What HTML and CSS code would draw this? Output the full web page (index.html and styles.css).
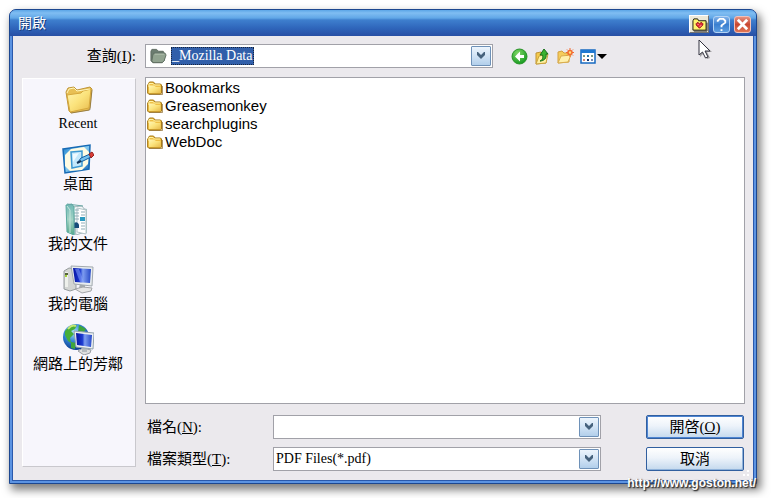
FILE: index.html
```html
<!DOCTYPE html>
<html lang="zh-Hant">
<head>
<meta charset="utf-8">
<meta name="viewport" content="width=device-width, initial-scale=1">
<title>開啟</title>
<link rel="stylesheet" href="styles.css">
</head>
<body>
<svg class="defs" aria-hidden="true">
  <defs>
    <linearGradient id="gold" x1="0" y1="0" x2="1" y2="1"><stop offset="0" stop-color="#fff6b5"/><stop offset=".5" stop-color="#fbe37c"/><stop offset="1" stop-color="#e8bb4c"/></linearGradient>
    <linearGradient id="blue" x1="0" y1="0" x2="1" y2="1"><stop offset="0" stop-color="#1c7ecb"/><stop offset=".45" stop-color="#8bd0f4"/><stop offset="1" stop-color="#1463b4"/></linearGradient>
    <linearGradient id="screen" x1="0" y1="0" x2="1" y2="0"><stop offset="0" stop-color="#0714a4"/><stop offset=".4" stop-color="#1c3bd0"/><stop offset=".55" stop-color="#7e9df0"/><stop offset="1" stop-color="#2648c8"/></linearGradient>
    <linearGradient id="teal" x1="0" y1="0" x2="0" y2="1"><stop offset="0" stop-color="#6fb7b5"/><stop offset=".5" stop-color="#a4d3c5"/><stop offset="1" stop-color="#55a889"/></linearGradient>
    <radialGradient id="globe" cx=".4" cy=".3" r=".7"><stop offset="0" stop-color="#a9e3fb"/><stop offset=".5" stop-color="#3487d5"/><stop offset="1" stop-color="#0c3c93"/></radialGradient>
    <radialGradient id="green" cx=".4" cy=".3" r=".7"><stop offset="0" stop-color="#82d867"/><stop offset="1" stop-color="#179b22"/></radialGradient>
    <symbol id="folder" viewBox="0 0 16 14"><path d="M1 3.5 2.5 1h4L8 3h5.5l1 1v8l-1 1h-12L.6 12V4z" fill="#efbf45" stroke="#a77a18"/><path d="M2 4.5h5L9 6h4.5v6H2z" fill="url(#gold)"/><path d="M2 6V2.5h4L7.5 4H13" fill="none" stroke="#fff3a7"/><path d="M15.5 5v8.5H2" fill="none" stroke="#85601c" opacity=".65"/></symbol>
    <symbol id="chevron" viewBox="0 0 10 8"><path d="M1 0v3l4 4 4-4V0H8L5 3 2 0z" fill="#46627d"/></symbol>
  </defs>
</svg>

<main class="dialog">
  <header class="titlebar">
    <h1>開啟</h1>
    <button class="cap cap-fav" aria-label="我的最愛"><svg viewBox="0 0 18 16"><path d="M2 14V4l1-2h4l1 2h8v10z" fill="#fff36d" stroke="#17150a"/><path d="M3 15h14V6" stroke="#222" fill="none"/><path d="M9 12 5.5 8.5V7l1-1h1L9 7.2 10.5 6h1l1 1v1.5z" fill="#e92b35" stroke="#8c0b1b"/><path d="M7 8h1m2 1h1m-2 1h1" stroke="#ffb7b0"/></svg></button>
    <button class="cap cap-help" aria-label="說明"><svg viewBox="0 0 16 16"><path d="M4 5V4l2-2h4l2 2v2l-4 3v2" fill="none" stroke="#fff" stroke-width="2"/><path d="M7 13h2v2H7z" fill="#fff"/></svg></button>
    <button class="cap cap-close" aria-label="關閉"><svg viewBox="0 0 16 16"><path d="m3 3 10 10M13 3 3 13" stroke="#fff" stroke-width="3"/></svg></button>
  </header>

  <div class="client">
    <label class="look-label" for="look">查詢(<u>I</u>):</label>
    <div class="toolbar">
      <div class="combo look">
        <svg class="closed" viewBox="0 0 18 16"><path d="M1 3 2 1h5l2 2h5l1 2v8l-2 2H3l-2-2z" fill="#6b7c70" stroke="#5c695f"/><path d="m3 7 1-2h12l1 2-2 6-2 2H3l-1-2z" fill="#91a390" stroke="#606e62"/><path d="M5 6h10" stroke="#b7c5b4"/></svg>
        <select id="look"><option>_Mozilla Data</option></select>
        <span class="arrow"><svg><use href="#chevron"/></svg></span>
      </div>
      <div class="tools">
        <button class="tool" aria-label="上一頁"><svg viewBox="0 0 17 17"><circle cx="8.5" cy="8.5" r="7.5" fill="url(#green)" stroke="#299328"/><path d="M9 3.5 4 8.5l5 5V10h4V7H9z" fill="#fff"/></svg></button>
        <button class="tool" aria-label="上移一層"><svg viewBox="0 0 17 17"><path d="M2 16V5l5-1 1 2h4v9z" fill="#f5ca4d" stroke="#bf9335"/><path d="m2 16 3-8 9-2-2 9z" fill="#fff0a0" stroke="#c9a23d"/><path d="M6 13c3-1 3-4 2.5-6H6l4-6 4 5h-2c1 4-2 7-6 7z" fill="#3bb22e" stroke="#17701a"/></svg></button>
        <button class="tool" aria-label="建立新資料夾"><svg viewBox="0 0 17 17"><path d="M1 15V4l4-1 2 2h5v9z" fill="#f5cc5b" stroke="#d39f40"/><path d="m1 15 3-7 10-1-3 7z" fill="#fff0ac" stroke="#d9ad4e"/><circle cx="13" cy="4.5" r="2" fill="#ffe37c" stroke="#f26b30" stroke-width="1.5"/><path d="M13 0v2m0 5v2M9 4.5h2m4 0h2M10 1.5l1 1m4 4 1 1m0-6-1 1m-4 4-1 1" stroke="#f26b30"/></svg></button>
        <button class="tool views" aria-label="檢視"><svg viewBox="0 0 27 17"><rect x="1" y="2" width="14" height="13" fill="#fff" stroke="#176ac1" stroke-width="1.5"/><path d="M1 2h14v3H1z" fill="#2079d2"/><path d="M3 8h2m6 0h2" stroke="#7c9980" stroke-width="2"/><path d="M7 8h2" stroke="#2d7bad" stroke-width="2"/><path d="M3 12h2" stroke="#d28b78" stroke-width="2"/><path d="M7 12h2" stroke="#15366f" stroke-width="2"/><path d="M11 12h2" stroke="#768cb5" stroke-width="2"/><path d="M17 6h10l-5 5z" fill="#000"/></svg></button>
      </div>
    </div>

    <nav class="places">
      <a href="#"><svg viewBox="0 0 32 32"><path d="m4 9 2-4 6-1 3 3 13-3 2 2-2 19-1 2-18 3-2-2z" fill="#e8c054" stroke="#c0963a"/><path d="m5 12 14-2 2-2 8-2-2 19-19 4z" fill="url(#gold)" stroke="#d6a83c"/><path d="m5 10 2-4 5-1 3 3 13-2" stroke="#fff6be" fill="none"/><path d="m9 30 19-3 2-20" stroke="#605740" fill="none" opacity=".4"/></svg><span class="latin">Recent</span></a>
      <a href="#"><svg viewBox="0 0 32 32"><path d="m1 6 27-4-1 24-24 4z" fill="url(#blue)" stroke="#176ab4" stroke-width="1.5"/><path d="m9 6 13-2 5 5-1 12-6 6-12 1-5-5V12z" fill="#fffbe2"/><path d="m9 9 11-1v15l-10 2z" fill="#c3e8fb" stroke="#3c98d2" stroke-width="1.5"/><path d="m11 11 6-1-6 9z" fill="#eefaff"/><path d="m16 19 3-4 9-4 1 3-8 4z" fill="#75c1ef" stroke="#125c9d"/><path d="m27 11 3-2 2 3-3 3z" fill="#dc3d36" stroke="#94211f"/><path d="m15 20 4-2" stroke="#153659" stroke-width="2"/></svg><span>桌面</span></a>
      <a href="#"><svg viewBox="0 0 32 32"><path d="m12 3 13 3v24l-13 2z" fill="#aac6c5"/><path d="m11 4 9-1 3 4v22l-9 3z" fill="#f4fafa" stroke="#a7b8bd"/><path d="m15 5 9 2v24l-9-2z" fill="#fff" stroke="#b3c3c8"/><path d="M12 10h5m-5 3h5m-5 3h5m-4-9h4m2 2h4m-4 3h4m-4 8h4m-4 3h4m-4 3h4" stroke="#91adb8"/><path d="M18 14h5v4h-5z" fill="#2b9ac0"/><path d="M11 22c2-4 5-3 6 0v3h-5z" fill="#174c79"/><path d="m4 2 6-1 2 3v28l-7-3z" fill="url(#teal)" stroke="#5aaaa0"/><path d="m5 3 3 4v23" fill="none" stroke="#c6e8dd"/><path d="m5 1 16 2" stroke="#68a6a4"/></svg><span>我的文件</span></a>
      <a href="#"><svg viewBox="0 0 32 32"><path d="m2 8 5-3 7 1v20l-6 2-6-2z" fill="#d3d5d3" stroke="#969c9e"/><path d="M3 9h3v15H3z" fill="#eef0eb"/><path d="M3 11h3" stroke="#55653a" stroke-width="2"/><path d="M3 13h2" stroke="#a3d236" stroke-width="2"/><path d="m18 21 5 1v4l-6-1z" fill="#a4aaad"/><path d="m13 26 8-2 9 1-1 3-9 2z" fill="#e6e6e5" stroke="#a3a5a8"/><path d="m9 3 22 1-1 19-18-2z" fill="#e8ecee" stroke="#a2a9ae"/><path d="m11 5 18 1-1 14-15-1z" fill="url(#screen)"/><path d="m17 6 5 13h-4l-5-13z" fill="#8fa9ff" opacity=".5"/></svg><span>我的電腦</span></a>
      <a href="#"><svg viewBox="0 0 32 32"><circle cx="14" cy="14" r="13" fill="url(#globe)"/><path d="m3 8 5-5 7-1-2 4-4 2 3 3-4 4 1 5-3-2-3-6z" fill="#47ae38"/><path d="m17 2 7 4-3 4-5-1zM9 19l5 1-1 6-4-1z" fill="#3ea63b"/><path d="M6 6q4-5 8-3" stroke="#c3e873" stroke-width="2" fill="none"/><path d="m16 28 5-3 8 2-1 3-6 2z" fill="#dedfdf" stroke="#989da4"/><path d="m20 23 5 1v5h-5z" fill="#b4babe"/><path d="m12 8 20 2-1 16-17-2z" fill="#eceff1" stroke="#91a1ac"/><path d="m14 10 16 2-1 12-14-2z" fill="url(#screen)"/></svg><span>網路上的芳鄰</span></a>
    </nav>

    <ul class="files">
      <li><svg><use href="#folder"/></svg>Bookmarks</li>
      <li><svg><use href="#folder"/></svg>Greasemonkey</li>
      <li><svg><use href="#folder"/></svg>searchplugins</li>
      <li><svg><use href="#folder"/></svg>WebDoc</li>
    </ul>

    <form class="fields">
      <label for="name">檔名(<u>N</u>):</label>
      <div class="combo"><input id="name" type="text"><span class="arrow"><svg><use href="#chevron"/></svg></span></div>
      <button class="push primary" type="button">開啓(<u>O</u>)</button>
      <label for="type">檔案類型(<u>T</u>):</label>
      <div class="combo"><select id="type"><option>PDF Files(*.pdf)</option></select><span class="arrow"><svg><use href="#chevron"/></svg></span></div>
      <button class="push" type="button">取消</button>
    </form>
  </div>
  <span class="grip"></span>
</main>

<svg class="pointer" viewBox="0 0 14 22" aria-hidden="true"><path d="M2 2v16l4-4 3 6 3-1-3-6h5z" fill="#555" opacity=".5"/><path d="M1 1v15l3.5-3 3 6 2.5-1-3-6h5z" fill="#fff" stroke="#333340"/></svg>
<div class="watermark">http://www.goston.net/</div>
</body>
</html>
```
FILE: styles.css
```css
* { box-sizing: border-box; }

body {
  margin: 0;
  padding: 9px 14px 14px 9px;
  min-height: 100vh;
  display: flex;
  position: relative;
  background: #fff;
  color: #000;
  font: 15px/18px "Liberation Serif", "Noto Sans CJK TC", serif;
}

button, input, select { font: inherit; color: inherit; margin: 0; }
button { padding: 0; }
svg { display: block; flex: none; }
.defs { position: absolute; width: 0; height: 0; }

.dialog {
  flex: 1;
  min-width: 0;
  display: flex;
  flex-direction: column;
  position: relative;
  padding: 0 3px 3px;
  border: 1px solid #1c4790;
  border-radius: 7px 7px 0 0;
  background: #5b93e2;
  box-shadow: 3px 5px 8px 1px rgba(0, 0, 0, .5);
}

.titlebar {
  z-index: 1;
  display: flex;
  align-items: center;
  gap: 4px;
  height: 26px;
  margin: 0 -3px;
  padding: 4px 5px 2px 8px;
  border-radius: 6px 6px 0 0;
  background: linear-gradient(#5ca6e7 0, #80bdf2 3px, #61a7e7 8px, #3e7fce 10px, #2f66bb 18px, #284fa4 26px);
}
.titlebar h1 {
  flex: 1;
  margin: 0;
  font-size: 14px;
  font-weight: 400;
  line-height: 18px;
  color: #fff;
  text-shadow: 1px 1px 0 #173b79;
}
.cap {
  display: grid;
  place-items: center;
  width: 17px;
  height: 17px;
  border: 1px solid #b3d3f4;
  border-radius: 3px;
}
.cap svg { width: 15px; height: 15px; }
.cap-fav {
  width: 20px;
  height: 18px;
  background: #ece9d8;
  border-color: #fff #727272 #727272 #fff;
  border-radius: 0;
}
.cap-fav svg { width: 17px; }
.cap-help { background: linear-gradient(#7fb1e9, #3a7fd0 50%, #5d9ee0); }
.cap-close { border-color: #f1c0b8; background: linear-gradient(#e69281, #c94731 50%, #df7555); }

.client {
  flex: 1;
  display: grid;
  grid-template-columns: 114px minmax(0, 1fr);
  grid-template-rows: auto 1fr auto;
  column-gap: 9px;
  padding: 8px 8px 9px 9px;
  background: #ebe9ed;
  box-shadow: 0 0 0 1px #2a59ac;
}

.look-label { text-align: right; line-height: 24px; }
.toolbar { display: flex; align-items: center; gap: 18px; padding-bottom: 9px; }
.combo {
  display: flex;
  align-items: center;
  height: 24px;
  padding: 1px;
  background: #fff;
  border: 1px solid #a1a1a8;
  font-size: 14px;
}
.look { flex: 0 1 348px; gap: 4px; padding-left: 4px; }
.look .closed { width: 17px; height: 16px; }
.combo select, .combo input {
  appearance: none;
  flex: 1;
  min-width: 0;
  height: 18px;
  padding: 0 1px;
  border: 0;
  border-radius: 0;
  outline: 0;
  background: transparent;
}
.look select { flex: none; background: #315faa; color: #fff; outline: 1px dotted #18243c; outline-offset: -1px; }
.combo .arrow {
  flex: none;
  display: grid;
  place-items: center;
  width: 20px;
  height: 20px;
  margin-left: auto;
  border: 1px solid #6e91b8;
  border-radius: 1px;
  background: linear-gradient(#edf5fd, #cbdff3 60%, #b2cfeb);
  pointer-events: none;
}
.arrow svg { width: 10px; height: 8px; }

.tools { display: flex; gap: 6px; }
.tool { width: 17px; height: 17px; border: 0; background: none; }
.tool svg { width: 100%; height: 100%; }
.views { width: 27px; }

.places {
  grid-row: 2 / 4;
  display: flex;
  flex-direction: column;
  gap: 10px;
  margin: 1px 0 4px;
  padding: 4px 2px 0 0;
  background: #f7f6fc;
  border: 1px solid #fff;
  border-right-color: #c9c8cd;
  border-bottom-color: #c9c8cd;
}
.places a {
  display: flex;
  flex-direction: column;
  align-items: center;
  color: #000;
  text-decoration: none;
  white-space: nowrap;
}
.places svg { width: 32px; height: 32px; }
.latin { font-size: 14px; }

.files {
  margin: 0;
  padding: 1px;
  list-style: none;
  background: #fff;
  border: 1px solid #a1a1a8;
  font-family: "Liberation Sans", sans-serif;
}
.files li { display: flex; align-items: center; gap: 2px; }
.files svg { width: 16px; height: 14px; }

.fields {
  display: grid;
  grid-template-columns: 128px minmax(0, 328px) minmax(8px, 1fr) 98px;
  row-gap: 8px;
  align-items: center;
  padding: 11px 1px 0 0;
}
.fields label { padding-left: 2px; }
.push {
  grid-column: 4;
  height: 24px;
  line-height: 20px;
  border: 1px solid #315f9f;
  border-radius: 2px;
  background: linear-gradient(#fff, #edf3fa 45%, #c3d8ed);
  box-shadow: inset -1px -1px 0 #8fb2da;
}
.primary { box-shadow: inset 0 0 0 1px #4d84d2; }

.grip {
  position: absolute;
  right: 5px;
  bottom: 5px;
  width: 12px;
  height: 12px;
  background: radial-gradient(circle at 1px 1px, #fff 1px, transparent 1px) 0 0 / 4px 4px;
  clip-path: polygon(100% 0, 100% 100%, 0 100%);
}
.pointer { position: absolute; left: 698px; top: 39px; width: 14px; height: 22px; }
.watermark {
  position: absolute;
  right: 15px;
  bottom: 7px;
  font: bold 12px/16px "Liberation Sans", sans-serif;
  color: #fff;
  text-shadow: 1px 1px 1px #333, 1px 1px 2px #555;
}
```
